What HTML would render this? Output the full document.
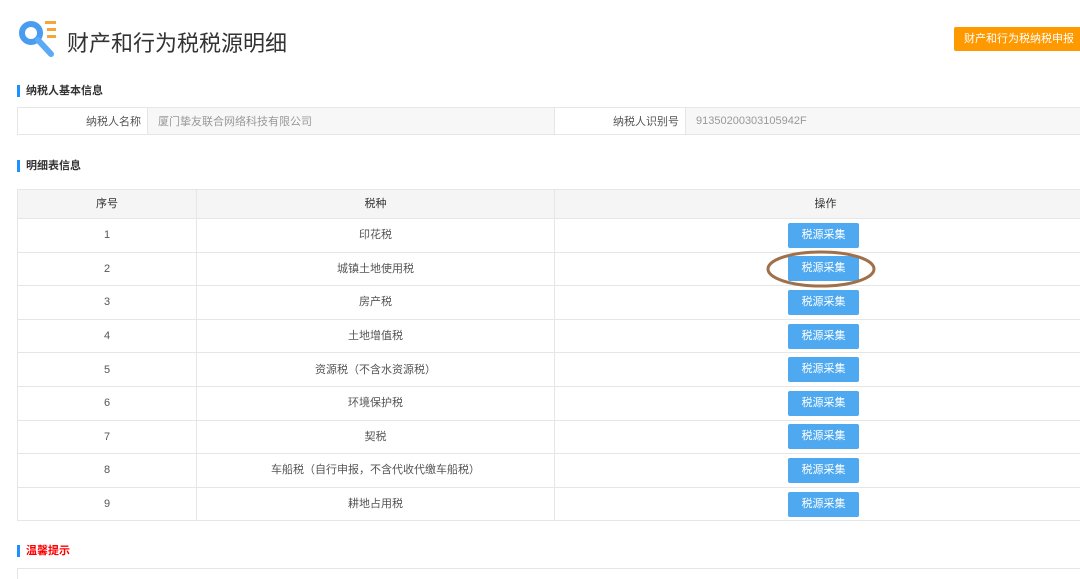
<!DOCTYPE html>
<html><head><meta charset="utf-8"><style>
body{margin:0;width:1080px;height:575px;overflow:hidden;background:#fff;font-family:"Liberation Sans","Noto Sans CJK SC",sans-serif;position:relative}
.a{position:absolute}
.sec{position:absolute;left:17px;font-size:11px;font-weight:bold;color:#333;border-left:3px solid #1e90ff;padding-left:6px;line-height:12px}
table{border-collapse:collapse;position:absolute;left:17px;font-size:11px;color:#555;table-layout:fixed}
td{border:1px solid #e6e6e6;padding:0;overflow:hidden;white-space:nowrap}
.t td{text-align:center;height:32.6px;line-height:14px}
.t tr.h td{height:28px}
.btn{display:block;margin-left:233px;width:71px;height:25px;line-height:25px;background:#4ea9f0;color:#fff;border-radius:2px;font-size:11px;text-align:center}
</style></head><body>
<svg class="a" style="left:18px;top:19px" width="40" height="40" viewBox="0 0 40 40">
<circle cx="13" cy="14" r="9" fill="none" stroke="#4a9cf0" stroke-width="6"/>
<line x1="20" y1="21" x2="33" y2="35" stroke="#5aaaf5" stroke-width="6" stroke-linecap="round"/>
<rect x="27" y="2" width="11" height="3" fill="#f7a53b"/><rect x="29" y="9" width="9" height="3" fill="#f7a53b"/><rect x="29" y="16" width="9" height="3" fill="#f7a53b"/>
</svg>
<div class="a" style="left:67px;top:26px;font-size:22px;color:#333">财产和行为税税源明细</div>
<div class="a" style="left:954px;top:27px;width:130px;height:24px;background:#ff9900;color:#fff;font-size:11px;line-height:24px;text-align:center;border-radius:2px">财产和行为税纳税申报</div>
<div class="sec" style="top:85px">纳税人基本信息</div>
<table style="top:107px;width:1080px">
<colgroup><col style="width:130px"><col style="width:407px"><col style="width:131px"><col></colgroup>
<tr style="height:27px"><td style="text-align:right;padding-right:6px">纳税人名称</td><td style="background:#f7f7f7;color:#999;padding-left:10px">厦门挚友联合网络科技有限公司</td><td style="text-align:right;padding-right:6px">纳税人识别号</td><td style="background:#f7f7f7;color:#999;padding-left:10px">91350200303105942F</td></tr>
</table>
<div class="sec" style="top:160px">明细表信息</div>
<table class="t" style="top:189px;width:1080px">
<colgroup><col style="width:179px"><col style="width:358px"><col></colgroup>
<tr class="h" style="background:#f5f5f5;color:#333"><td>序号</td><td>税种</td><td>操作</td></tr>
<tr><td>1</td><td>印花税</td><td><span class="btn">税源采集</span></td></tr>
<tr><td>2</td><td>城镇土地使用税</td><td><span class="btn">税源采集</span></td></tr>
<tr><td>3</td><td>房产税</td><td><span class="btn">税源采集</span></td></tr>
<tr><td>4</td><td>土地增值税</td><td><span class="btn">税源采集</span></td></tr>
<tr><td>5</td><td>资源税（不含水资源税）</td><td><span class="btn">税源采集</span></td></tr>
<tr><td>6</td><td>环境保护税</td><td><span class="btn">税源采集</span></td></tr>
<tr><td>7</td><td>契税</td><td><span class="btn">税源采集</span></td></tr>
<tr><td>8</td><td>车船税（自行申报，不含代收代缴车船税）</td><td><span class="btn">税源采集</span></td></tr>
<tr><td>9</td><td>耕地占用税</td><td><span class="btn">税源采集</span></td></tr>
</table>
<svg class="a" style="left:765px;top:248px" width="112" height="42"><ellipse cx="56" cy="21" rx="53" ry="17" fill="none" stroke="#a0704a" stroke-width="3"/></svg>
<div class="sec" style="top:545px;color:#f00">温馨提示</div>
<div class="a" style="left:17px;top:568px;width:1070px;border-top:1px solid #e6e6e6;border-left:1px solid #e6e6e6;height:10px"></div>
</body></html>
